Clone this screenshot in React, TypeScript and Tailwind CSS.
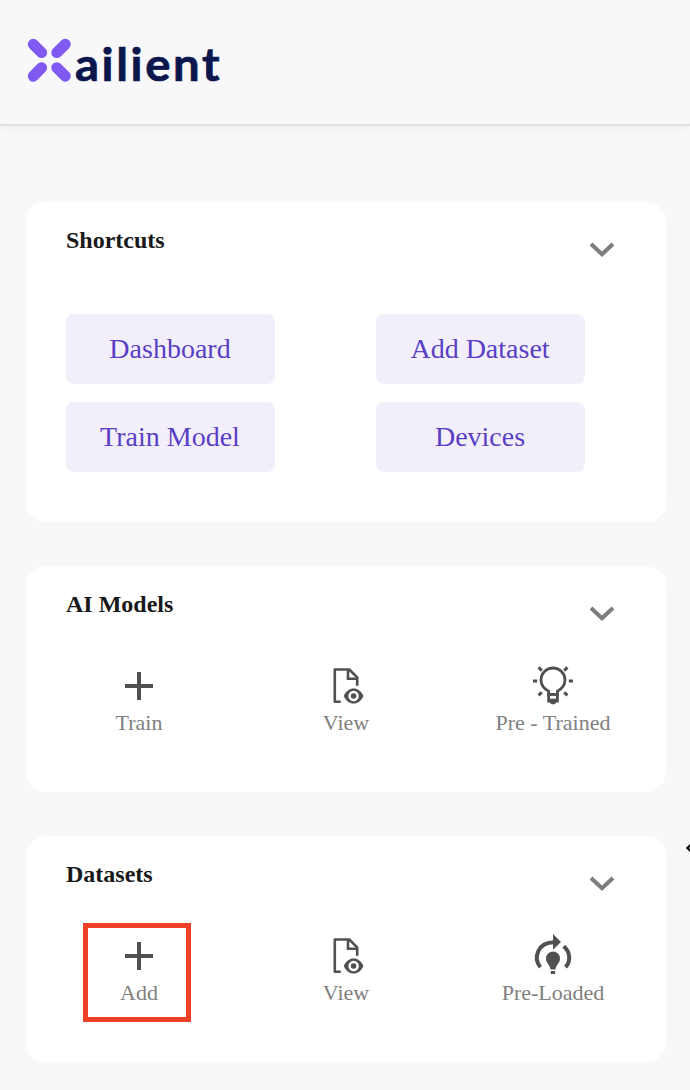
import React from "react";

function Mark() {
  return (
    <svg className="h-11 w-11 shrink-0" viewBox="0 0 44 44" fill="none" stroke="#8059f3" strokeWidth="11" strokeLinecap="round">
      <path d="M6.3 6.3L14.6 14.6M38.3 6.3L29.8 14.6M6.3 38.2L14.6 29.7M38.3 38.2L29.8 29.7" />
    </svg>
  );
}

function Chevron() {
  return (
    <svg className="mt-[37px] mr-[51px] h-[20px] w-[26px] shrink-0" viewBox="0 0 26 20" fill="none" stroke="#7d7d7d" strokeWidth="4">
      <path d="M2 5L13 15.3L24 5" />
    </svg>
  );
}

function PlusIcon() {
  return (
    <svg className="h-10 w-12" viewBox="0 0 48 40" fill="none" stroke="#505050" strokeWidth="4">
      <path d="M10 20H38M24 6V34" />
    </svg>
  );
}

function ViewIcon() {
  return (
    <svg className="h-10 w-12" viewBox="0 0 48 40" fill="none" stroke="#505050">
      <path d="M18.7 35.8H12.8V3.5H27.3L35.2 11.4V19.7" strokeWidth="2.6" strokeLinejoin="round" />
      <path d="M26 3.5V12.8H35.2" strokeWidth="2.6" />
      <path d="M21.8 30C25.8 20 37.4 20 41.4 30C37.4 40 25.8 40 21.8 30Z" fill="#505050" stroke="none" />
      <circle cx="31.6" cy="30" r="5.2" fill="white" stroke="none" />
      <circle cx="31.6" cy="30" r="2.8" fill="#505050" stroke="none" />
    </svg>
  );
}

function BulbIcon() {
  return (
    <svg className="h-10 w-12 overflow-visible" viewBox="0 0 48 40" fill="none" stroke="#505050">
      <path d="M19.6 28.5V25.2C15.5 23 12 19.5 12 14A12 12 0 0 1 36 14C36 19.5 32.5 23 28.4 25.2V28.5Z" strokeWidth="2.8" />
      <path d="M18.2 27.2H29.8V36.6H27.3L25.5 38.2H22.5L20.7 36.6H18.2Z" fill="#505050" stroke="none" />
      <path d="M21 31.3H27" stroke="white" strokeWidth="2.8" />
      <path d="M4 15H8.2M39.8 15H44M9.6 1.4L12.8 4.6M38.4 1.4L35.2 4.6M9.6 29.4L12.8 26.2M38.4 29.4L35.2 26.2" strokeWidth="3" />
    </svg>
  );
}

function PreLoadedIcon() {
  return (
    <svg className="h-10 w-12 overflow-visible" viewBox="0 0 48 40" fill="none" stroke="#505050" strokeWidth="4">
      <path d="M11.4 31.2C3.7 21.5 9 6.2 25 6.2" />
      <path d="M24 -2L32 6L24 13.7Z" fill="#505050" stroke="none" />
      <path d="M34.7 10.2C41.7 16.2 41.8 25.4 36.5 31.2" />
      <path d="M21.5 33.5C21.5 29 17 27.3 17 22.4A7 7 0 0 1 31 22.4C31 27.3 26.5 29 26.5 33.5Z" fill="#505050" stroke="none" />
      <path d="M21.8 36.5H26.2" strokeWidth="3" />
    </svg>
  );
}

function Card({ title, className, children }: { title: string; className: string; children: React.ReactNode }) {
  return (
    <section className={`w-[640px] rounded-[20px] bg-white ${className}`}>
      <div className="flex h-[92px] items-start justify-between">
        <h2 className="mt-6 ml-10 text-[24px] leading-7 font-bold text-[#19191a]">{title}</h2>
        <Chevron />
      </div>
      {children}
    </section>
  );
}

function Item({ icon, label, marked = false }: { icon: React.ReactNode; label: string; marked?: boolean }) {
  return (
    <div className="flex justify-center">
      <button className="relative flex flex-col items-center">
        {icon}
        <span className="mt-[3px] text-[22px] leading-7 whitespace-nowrap text-[#808080]">{label}</span>
        {marked && <span className="absolute -top-[13px] left-1/2 -ml-[56px] h-[99px] w-[108px] border-5 border-[#ef4128]" />}
      </button>
    </div>
  );
}

const shortcuts = ["Dashboard", "Add Dataset", "Train Model", "Devices"];

export default function App() {
  return (
    <div className="h-[1090px] w-[690px] overflow-hidden bg-[#f8f8fb] font-['Liberation_Serif',serif]">
      <header className="flex h-[126px] items-start border-b-2 border-[#e0e0e3] pt-[38px] pl-[27px] shadow-[0_2px_12px_rgba(0,0,0,0.04)]">
        <Mark />
        <span className="ml-[4px] origin-left scale-x-105 font-['Lato',sans-serif] text-[45px] leading-[52px] font-bold tracking-[2.5px] text-[#0b174c] [-webkit-text-stroke:0.7px_#0b174c]">ailient</span>
      </header>
      <main className="relative flex flex-col gap-11 pt-[76px] pl-[26px]">
        <Card title="Shortcuts" className="h-80">
          <div className="mt-5 ml-10 grid grid-cols-[209px_209px] gap-x-[101px] gap-y-[18px]">
            {shortcuts.map((name) => (
              <button key={name} className="h-[70px] rounded-lg bg-[#f2effb] pr-px text-[28px] leading-8 text-[#593fc6]">
                {name}
              </button>
            ))}
          </div>
        </Card>
        <Card title="AI Models" className="h-[226px]">
          <div className="mx-auto mt-2 grid w-[621px] grid-cols-3">
            <Item icon={<PlusIcon />} label="Train" />
            <Item icon={<ViewIcon />} label="View" />
            <Item icon={<BulbIcon />} label="Pre - Trained" />
          </div>
        </Card>
        <Card title="Datasets" className="h-[226px]">
          <div className="mx-auto mt-2 grid w-[621px] grid-cols-3">
            <Item icon={<PlusIcon />} label="Add" marked />
            <Item icon={<ViewIcon />} label="View" />
            <Item icon={<PreLoadedIcon />} label="Pre-Loaded" />
          </div>
        </Card>
        <svg className="absolute top-[716px] right-0 h-3 w-1" viewBox="0 0 4 12" fill="none" stroke="#111" strokeWidth="2.2">
          <path d="M5 2.5L1.3 6L5 9.5" />
        </svg>
      </main>
    </div>
  );
}
